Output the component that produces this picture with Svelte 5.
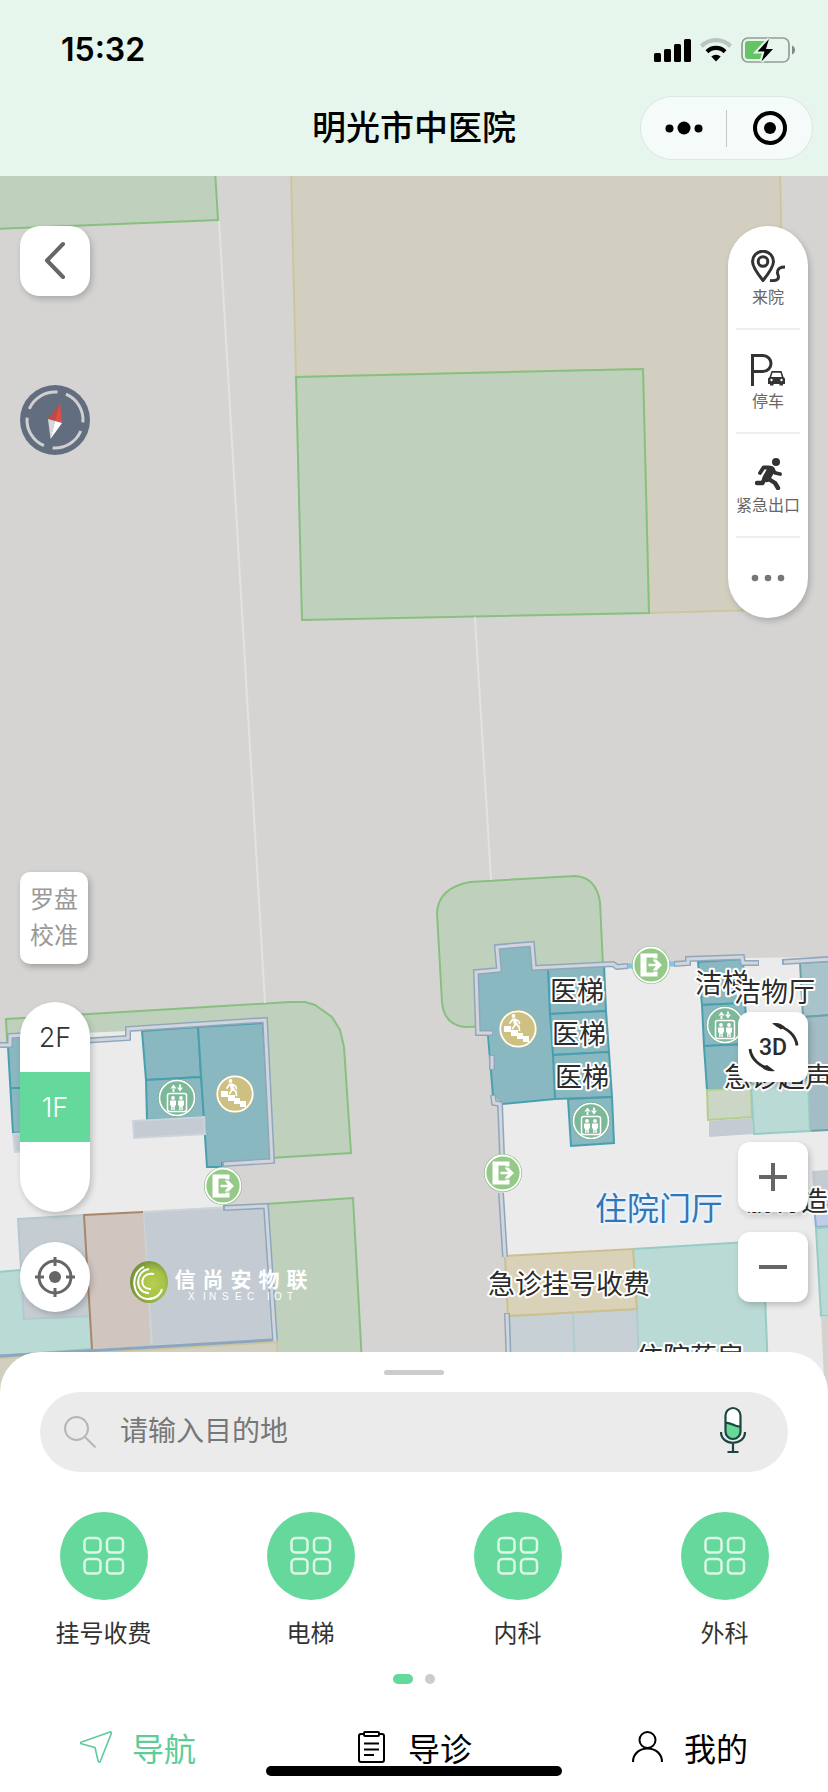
<script>
  const departments = ['挂号收费', '电梯', '内科', '外科'];
  const floors = ['2F', '1F'];
  let floor = $state('1F');
  let tab = $state('导航');
  let query = $state('');

  const roomLabels = [
    { text: '医梯', x: 550, y: 1001 },
    { text: '医梯', x: 552, y: 1044 },
    { text: '医梯', x: 555, y: 1087 },
    { text: '洁梯', x: 695, y: 993 },
    { text: '洁物厅', x: 734, y: 1002 },
    { text: '急诊超声', x: 724, y: 1087 },
    { text: '肠胃造影', x: 747, y: 1211 },
    { text: '急诊挂号收费', x: 488, y: 1294 },
    { text: '住院药房', x: 636, y: 1367 }
  ];
  const brandGlyphs = [...'信尚安物联'].map((c, i) => ({ c, x: 185 + i * 28 }));
</script>

{#snippet elevator(x, y)}
  <g transform="translate({x} {y})">
    <circle r="19" fill="#6fae8c" />
    <circle r="17.5" fill="#7db998" stroke="#fff" stroke-width="1.6" />
    <rect x="-9.5" y="-4.5" width="19" height="18" rx="2" fill="none" stroke="#fff" stroke-width="1.5" />
    <path d="M-3.5-9v3M3-13.5v3" stroke="#fff" stroke-width="1.8" />
    <path d="M-6.500-9.500l3-4 3 4zM0-10.500l3 4 3-4z" fill="#fff" />
    <g fill="#fff">
      <circle cx="-4" cy="0" r="1.9" /><circle cx="4" cy="0" r="1.9" />
      <path d="M-7 2.500h6v5h-1.200v4.500h-1.400v-3h-.8v3h-1.400v-4.500h-1.200zM1 2.500h6v5h-1.200v4.500h-1.400v-3h-.8v3h-1.400v-4.500h-1.200z" />
    </g>
  </g>
{/snippet}

{#snippet stairs(x, y)}
  <g transform="translate({x} {y})">
    <circle r="19" fill="#bfb070" />
    <circle r="17.7" fill="#cec083" stroke="#fff" stroke-width="1.8" />
    <path d="M-14-3h7v4h7v3h5v3h6v6h-6v-3h-6v-3h-6v-4h-7z" fill="#fff" />
    <circle cx="-4.5" cy="-13" r="1.900" fill="#fff" />
    <path d="M-5.500-10.500h3l2.500 6.500h-4z" fill="#fff" />
    <path d="M-1-4l2 1.500 .5 4M-2.500-4.500l-3 4M-5.500-9.500l-2.500 3.500M-2.500-9.500l3 1.500 1 2.500" fill="none" stroke="#fff" stroke-width="1.700" stroke-linecap="round" stroke-linejoin="round" />
  </g>
{/snippet}

{#snippet exit(x, y)}
  <g transform="translate({x} {y})">
    <circle r="19" fill="#82b878" />
    <circle r="17.500" fill="#94c988" stroke="#fff" stroke-width="1.800" />
    <path d="M-10.500-11.500h17v5h-4v-1h-7v15h7v-1h4v5h-17z" fill="#fff" />
    <path d="M-2.500-1.300h7.500l-3.500-4.200h4l5.500 5.500-5.500 5.500h-4l3.500-4.200h-7.500z" fill="#fff" stroke="#94c988" stroke-width="1.600" paint-order="stroke" />
  </g>
{/snippet}

<div class="page">
  <header>
    <div class="status">
      <time>15:32</time>
      <div class="signals">
        <svg width="37" height="24" viewBox="0 0 37 24" aria-hidden="true">
          <rect y="15" width="7" height="9" rx="1.5" /><rect x="10" y="11" width="7" height="13" rx="1.5" />
          <rect x="20" y="6" width="7" height="18" rx="1.5" /><rect x="30" y="1" width="7" height="23" rx="1.5" />
        </svg>
        <svg width="32" height="24" viewBox="0 0 32 24" aria-hidden="true">
          <path d="M1.500 8.200a20.500 20.500 0 0 1 29 0" fill="none" stroke="#b9c5be" stroke-width="4.200" />
          <path d="M7 13.700a12.700 12.700 0 0 1 18 0" fill="none" stroke="#000" stroke-width="4.200" />
          <path d="M11.300 18.600a6.600 6.600 0 0 1 9.400 0L16 23.500z" />
        </svg>
        <svg width="54" height="26" viewBox="0 0 54 26" aria-hidden="true">
          <rect x="1" y="1" width="47" height="24" rx="6" fill="none" stroke="#929d97" stroke-width="1.7" />
          <path d="M51 8.500c4 1.500 4 7.500 0 9z" fill="#7f8a84" />
          <rect x="4" y="4" width="22" height="18" rx="3" fill="#65c466" />
          <path d="M28 2L16.500 14.500h7L20.500 24.500 32 12h-7z" fill="#000" stroke="#e6f6ec" stroke-width="4" paint-order="stroke" />
        </svg>
      </div>
    </div>
    <div class="titlebar">
      <h1>明光市中医院</h1>
      <div class="capsule">
        <button aria-label="更多">
          <svg width="40" height="16" viewBox="0 0 40 16"><circle cx="5.500" cy="8.500" r="4" /><circle cx="20" cy="8" r="6.500" /><circle cx="34.500" cy="8.500" r="4" /></svg>
        </button>
        <i></i>
        <button aria-label="关闭">
          <svg width="36" height="36" viewBox="0 0 36 36"><circle cx="18" cy="18" r="15" fill="none" stroke="#000" stroke-width="4" /><circle cx="18" cy="18" r="6" /></svg>
        </button>
      </div>
    </div>
  </header>

  <main>
    <svg class="plan" viewBox="0 176 828 1216" preserveAspectRatio="xMidYMin slice" role="img" aria-label="院区地图">
      <rect y="170" width="828" height="1230" fill="#d5d4d2" />
      <g fill="#d2cfc1" stroke="#ccc69f" stroke-width="2">
        <path d="M291 170H780L789 609 649 613 643 369 296 377z" />
      </g>
      <g fill="#bfd1bd" stroke="#88c07f" stroke-width="2">
        <path d="M-5 229L218 220 215 170H-5z" />
        <path d="M296 377L643 369 649 613 302 620z" />
        <path d="M470 882L575 876Q596 877 600 902L603 966 500 1026 465 1027Q444 1025 442 1002L437 913Q438 888 470 882z" />
        <path d="M6 1019L290 1002 305 1002 315 1005 332 1017 340 1030 344 1047 351 1153 270 1158 8 1060z" />
        <path d="M266 1204L353 1198 364 1400H270z" />
      </g>
      <g stroke="#e3e2e1" stroke-width="2" fill="none">
        <path d="M219 221L265 1003M475 617L491 880" />
      </g>

      <!-- outpatient building -->
      <path d="M0 1045H10V1036L129 1031 265 1020 272 1161 222 1164 224 1207 267 1205 276 1342 0 1358z" fill="#ebebeb" />
      <g fill="#8ab8c0" stroke="#4a9fae" stroke-width="2">
        <path d="M8 1047L13 1133 40 1131V1036H12zM11 1088h20" />
        <path d="M142 1031L198 1027 201 1077 146 1080z" />
        <path d="M146 1080L201 1077 204 1117 147 1120z" />
        <path d="M198 1027L263 1023 271 1160 222 1163V1167L207 1167z" />
      </g>
      <g fill="#c5cbd2" stroke="#ccd4da" stroke-width="2">
        <path d="M13 1134L40 1132V1150L15 1152zM133 1121L204 1117 205 1134 134 1138z" />
        <path d="M143 1212L265 1205 272 1340 152 1346z" />
      </g>
      <path d="M-2 1272L21 1270 90 1316 92 1349-2 1356z" fill="#badad5" stroke="#97cbc3" stroke-width="2" />
      <path d="M18 1219L84 1215 90 1316 24 1319z" fill="#c5cdd3" stroke="#b4c9ce" stroke-width="2" />
      <path d="M143 1212L84 1215 92 1349 151 1346z" fill="#d1c5c0" />
      <path d="M143 1212L84 1215 92 1349" fill="none" stroke="#a8876a" stroke-width="2" />
      <path d="M-2 1358L277 1342 279 1400H-2z" fill="#d2cfc0" stroke="#cbc59d" stroke-width="2" />
      <g fill="none">
        <path d="M-2 1045H10V1036L40 1034M80 1041L128 1038V1029L265 1020 272 1161 222 1164M223 1208L266 1206 275 1341" stroke="#8fa7bd" stroke-width="6" />
        <path d="M-2 1045H10V1036L40 1034M80 1041L128 1038V1029L265 1020 272 1161 224 1164M225 1208L266 1206 275 1341" stroke="#d1d5dc" stroke-width="3" />
        <path d="M-2 1356L272 1340" stroke="#8ba6bd" stroke-width="3" />
      </g>

      <!-- inpatient building -->
      <path d="M500 1104L555 1099 604 966 675 964 688 960 743 958 828 957V1400H511L506 1257z" fill="#ebebeb" />
      <path d="M478 974L500 972 497 949 531 946 534 968 548 967 555 1099 502 1104 493 1095 489 1033H480z" fill="#8ab8c0" />
      <g fill="#8ab8c0" stroke="#4a9fae" stroke-width="2">
        <path d="M548 968L604 965 606 1011 550 1014z" />
        <path d="M550 1014L606 1011 609 1052 553 1055z" />
        <path d="M553 1055L609 1052 612 1097 555 1099z" />
        <path d="M568 1099L612 1097 614 1143 571 1146z" />
        <path d="M698 962L743 959 745 1003 702 1005z" />
        <path d="M702 1005L745 1003 748 1044 704 1046z" />
        <path d="M704 1046L748 1044 751 1088 707 1090z" />
        <path d="M555 1099L502 1104M488 1035L493 1096" />
      </g>
      <path d="M800 963L830 961V1015L803 1017z" fill="#a9c3cb" stroke="#6fa1ac" stroke-width="2" />
      <path d="M803 1017L830 1015V1130L810 1131z" fill="#a3bcc5" stroke="#6fa1ac" stroke-width="2" />
      <path d="M707 1090L751 1088 752 1117 708 1120z" fill="#ccd6c6" stroke="#b4d088" stroke-width="2" />
      <path d="M709 1121L752 1118 753 1134 709 1137z" fill="#c5cbd2" />
      <path d="M751 1084L808 1080 810 1131 754 1134z" fill="#badad5" stroke="#97cbc3" stroke-width="2" />
      <path d="M812 1171L830 1170V1205H814z" fill="#c5cbd2" />
      <path d="M814 1205H830V1226L816 1227z" fill="#c0cde6" stroke="#94abd4" stroke-width="2" />
      <path d="M816 1228L830 1227V1316H821z" fill="#badad5" stroke="#97cbc3" stroke-width="2" />
      <path d="M821 1316H830V1400H825z" fill="#d5d3d0" />
      <path d="M633 1249L763 1241 769 1400H640z" fill="#badad5" stroke="#97cbc3" stroke-width="2" />
      <path d="M509 1316L637 1309 640 1400H511zM573 1312L576 1400" fill="#c7d0d4" stroke="#aecdd2" stroke-width="2" />
      <path d="M505 1256L633 1249 637 1309 508 1316z" fill="#d9d2b8" stroke="#cbc08e" stroke-width="2" />
      <g fill="none">
        <path d="M627 966H640M662 964H676" stroke="#7fc4f0" stroke-width="5" />
        <path d="M493 1033H478L476 972 499 970 497 947 532 944 534 968 613 964 617 967 628 966M674 964L688 963V959L742 957 743 963 759 963M782 962L830 959M492 1055V1070M493 1095L494 1103 500 1104 502 1155M501 1193L505 1257M507 1313L510 1400" stroke="#8fa7bd" stroke-width="6" />
        <path d="M492 1033H478L476 972 499 970 497 947 532 944 534 968 613 964 617 967 627 966M675 964L688 963V959L742 957 743 963 758 963M784 962L830 959M492 1056V1069M493 1096L494 1103 500 1104 502 1155M501 1193L505 1257M507 1314L510 1400" stroke="#d1d5dc" stroke-width="3" />
      </g>

      {@render elevator(177, 1098)}
      {@render stairs(235, 1094)}
      {@render exit(223, 1186)}
      {@render stairs(518, 1029)}
      {@render elevator(591, 1121)}
      {@render elevator(725, 1025)}
      {@render exit(651, 965)}
      {@render exit(503, 1173)}

      <g class="room">
        {#each roomLabels as l}<text x={l.x} y={l.y}>{l.text}</text>{/each}
      </g>
      <text class="hall" x="595" y="1220">住院门厅</text>

      <g>
        <radialGradient id="leaf" cx="60%" cy="55%" r="60%">
          <stop offset="0" stop-color="#b8cf4e" /><stop offset=".55" stop-color="#a5c148" /><stop offset="1" stop-color="#6f9038" />
        </radialGradient>
        <ellipse cx="149" cy="1282" rx="19" ry="21" fill="url(#leaf)" />
        <g fill="none" stroke="#fff" stroke-width="2">
          <path d="M144 1267C130 1272 131 1298 148 1299 156 1299 161 1294 162 1289" />
          <path d="M149 1269C134 1271 135 1294 149 1293" />
          <path d="M154 1274C140 1271 138 1290 151 1289" />
        </g>
        <g class="brand">
          {#each brandGlyphs as g}<text x={g.x} y="1287">{g.c}</text>{/each}
        </g>
        <text class="brand-en" x="188 203 209 222 235 247 259 267 274 287" y="1300">XINSEC IOT</text>
      </g>
    </svg>

    <div class="side left">
      <div class="group top">
        <button class="tile back" aria-label="返回">
          <svg width="24" height="40" viewBox="0 0 24 40"><path d="M20 3L4 19.500 20 36" fill="none" stroke="#666" stroke-width="4" stroke-linecap="round" stroke-linejoin="round" /></svg>
        </button>
        <button class="compass" aria-label="指南针">
          <svg width="70" height="70" viewBox="0 0 70 70">
            <circle cx="35" cy="35" r="35" fill="#626e80" />
            <circle cx="35" cy="35" r="28" fill="none" stroke="#d0d0d1" stroke-width="3" stroke-dasharray="35 8.98" transform="rotate(-67 35 35)" />
            <path d="M40 18L28 34 35 36z" fill="#c04a45" /><path d="M40 18L42 38 35 36z" fill="#e04f46" />
            <path d="M30.500 54L28 34 35 36z" fill="#d8d8da" /><path d="M30.500 54L42 38 35 36z" fill="#fff" />
          </svg>
        </button>
      </div>
      <div class="group bottom">
        <button class="calibrate">罗盘<br />校准</button>
        <div class="floors">
          {#each floors as f}
            <button class:on={floor === f} onclick={() => (floor = f)}>{f}</button>
          {/each}
        </div>
        <button class="tile round" aria-label="定位">
          <svg width="40" height="40" viewBox="0 0 40 40"><circle cx="20" cy="20" r="16" fill="none" stroke="#666" stroke-width="3" /><circle cx="20" cy="20" r="6" fill="#666" /><path d="M20 0v9M20 31v9M0 20h9M31 20h9" stroke="#666" stroke-width="3" /></svg>
        </button>
      </div>
    </div>

    <div class="side right">
      <nav class="tools" aria-label="地图工具">
        <button>
          <svg width="34" height="32" viewBox="0 0 34 32" fill="none" stroke="#333" stroke-width="3">
            <path d="M12 30.500C6 23 1.500 17 1.500 11.500a10.500 10.300 0 0 1 21 0C22.500 17 18 23 12 30.500z" stroke-linejoin="round" /><circle cx="12" cy="11.500" r="4.800" />
            <path d="M19 30.500c5 .5 8.500-.5 8.500-3.500 0-2-1.500-3-1-5.500.5-3 3.500-4.500 7.500-4.500" />
          </svg>
          <span>来院</span>
        </button>
        <button>
          <svg width="34" height="32" viewBox="0 0 34 32">
            <path d="M1.500 32V1.500h10.500a8 8 0 0 1 0 16H2" fill="none" stroke="#333" stroke-width="3" />
            <path d="M20.500 17h10l2 6 1.500 1.500V30h-2v1.500h-3.500V30h-6v1.500h-3.500V30h-2v-5.500l1.500-1.500zM21.500 18.800l-1.300 4.200h10.600l-1.300-4.200z" fill="#333" fill-rule="evenodd" />
            <circle cx="20.500" cy="26" r="1.200" fill="#fff" /><circle cx="30.500" cy="26" r="1.200" fill="#fff" />
          </svg>
          <span>停车</span>
        </button>
        <button>
          <svg width="34" height="32" viewBox="0 0 34 32">
            <circle cx="25" cy="4" r="4" fill="#333" />
            <path d="M20 12L15.500 20" stroke="#333" stroke-width="8" stroke-linecap="round" />
            <path d="M18 9.500h-5.500L9 15M19 10l5.500 5 4.500 1" fill="none" stroke="#333" stroke-width="3.800" stroke-linecap="round" stroke-linejoin="round" />
            <path d="M14 20l-2.500 5H6M16 20l8 5 3 5" fill="none" stroke="#333" stroke-width="4.400" stroke-linecap="round" stroke-linejoin="round" />
          </svg>
          <span>紧急出口</span>
        </button>
        <button class="more" aria-label="更多工具">
          <svg width="34" height="8" viewBox="0 0 34 8" fill="#777"><circle cx="4" cy="4" r="3.300" /><circle cx="17" cy="4" r="3.300" /><circle cx="30" cy="4" r="3.300" /></svg>
        </button>
      </nav>
      <div class="view">
        <button class="tile" aria-label="切换3D">
          <svg width="54" height="54" viewBox="0 0 54 54">
            <path d="M30 5C42 8 50 16 51 25.500M4 29C5 39 14 47 25 49.500" fill="none" stroke="#2b2b2b" stroke-width="2.800" />
            <path d="M26 3.500C32 2 36 4 39 7L35 9.500zM29 51C23 52 19 50.500 15.500 47L21 45z" fill="#2b2b2b" />
            <text class="three" x="27" y="35" text-anchor="middle">3D</text>
          </svg>
        </button>
        <div class="zoom">
          <button class="tile" aria-label="放大"><svg width="28" height="28" viewBox="0 0 28 28"><path d="M14 0v28M0 14h28" stroke="#666" stroke-width="4" /></svg></button>
          <button class="tile" aria-label="缩小"><svg width="28" height="28" viewBox="0 0 28 28"><path d="M0 14h28" stroke="#666" stroke-width="4" /></svg></button>
        </div>
      </div>
    </div>
  </main>

  <section class="sheet">
    <div class="handle"></div>
    <label class="search">
      <svg width="32" height="32" viewBox="0 0 32 32" fill="none" stroke="#b6b6b6" stroke-width="2"><circle cx="12.500" cy="12.500" r="11.500" /><path d="M20.500 20.500L31.500 31.500" /></svg>
      <input type="text" placeholder="请输入目的地" aria-label="目的地" bind:value={query} />
      <button aria-label="语音输入">
        <svg width="28" height="48" viewBox="0 0 28 48">
          <rect x="6.500" y="2" width="15" height="31" rx="7.500" fill="#fff" />
          <path d="M6.500 17c6-1 8 4 15 3.500v5a7.500 7.500 0 0 1-15 0z" fill="#66d996" />
          <g fill="none" stroke="#1b4740" stroke-width="2.200"><rect x="6.500" y="2" width="15" height="31" rx="7.500" /><path d="M6.500 17c6-1 8 4 15 3.500M2 26c0 14.500 24 14.500 24 0M14 37v9M8.500 46h11" /></g>
        </svg>
      </button>
    </label>
    <div class="departments">
      {#each departments as d}
        <button>
          <i>
            <svg width="44" height="40" viewBox="0 0 44 40" fill="none" stroke="#dcf6e7" stroke-width="2.500"><rect x="2.500" y="2" width="16" height="14.500" rx="4" /><rect x="25" y="2" width="16" height="14.500" rx="4" /><rect x="2.500" y="23" width="16" height="14.500" rx="4" /><rect x="25" y="23" width="16" height="14.500" rx="4" /></svg>
          </i>
          <span>{d}</span>
        </button>
      {/each}
    </div>
    <div class="dots"><i class="on"></i><i></i></div>
  </section>

  <nav class="tabs" aria-label="主导航">
    <button class:on={tab === '导航'} onclick={() => (tab = '导航')}>
      <svg width="32" height="32" viewBox="0 0 32 32"><path d="M30 .9L1 11.200q-1.500 1 .2 1.500L15 16.500l3.200 13.800q1 1.500 2 .2L31.300 2.500Q31.500.5 30 .9z" fill="none" stroke="currentColor" stroke-width="1.600" stroke-linejoin="round" /></svg>
      导航
    </button>
    <button class:on={tab === '导诊'} onclick={() => (tab = '导诊')}>
      <svg width="32" height="32" viewBox="0 0 32 32" fill="none" stroke="currentColor" stroke-width="2"><rect x="3" y="3" width="25" height="28" rx="2" /><rect x="8" y="1" width="15" height="4" rx="1" fill="#fff" /><path d="M8 12.500h15M8 18.500h15M8 24h10" /></svg>
      导诊
    </button>
    <button class:on={tab === '我的'} onclick={() => (tab = '我的')}>
      <svg width="32" height="32" viewBox="0 0 32 32" fill="none" stroke="currentColor" stroke-width="2"><circle cx="15.500" cy="9" r="8" /><path d="M1 31c0-18 29-18 29 0" /></svg>
      我的
    </button>
    <div class="home"></div>
  </nav>
</div>

<style>
  :global(body) { margin: 0; }
  .page {
    display: flex;
    flex-direction: column;
    min-height: 100vh;
    overflow: hidden;
    background: #fff;
    color: #333;
    font-family: "Liberation Sans", "Noto Sans CJK SC", sans-serif;
  }
  button {
    display: flex;
    align-items: center;
    justify-content: center;
    padding: 0;
    border: 0;
    background: none;
    color: inherit;
    font: inherit;
    cursor: pointer;
  }
  svg { display: block; flex: none; }

  header { padding-bottom: 16px; background: #e6f6ec; color: #000; }
  .status {
    display: flex;
    align-items: center;
    justify-content: space-between;
    box-sizing: border-box;
    height: 96px;
    padding: 4px 33px 0 61px;
  }
  time { font: 600 32px/40px Inter, sans-serif; }
  .signals { display: flex; align-items: center; gap: 9px; }
  .titlebar {
    display: grid;
    grid-template-columns: 1fr auto 1fr;
    align-items: center;
    height: 64px;
    padding: 0 15px;
  }
  h1 { grid-column: 2; margin: 0; font-size: 34px; font-weight: 500; line-height: 64px; }
  .capsule {
    display: flex;
    align-items: center;
    justify-self: end;
    box-sizing: border-box;
    width: 173px;
    height: 64px;
    border: 1px solid #dde6e1;
    border-radius: 32px;
    background: #f5fbf8;
  }
  .capsule button { flex: 1; height: 100%; }
  .capsule i { width: 1px; height: 37px; background: #c2c8c5; }

  main { position: relative; display: flex; flex: 1; justify-content: space-between; }
  .plan { position: absolute; inset: 0; width: 100%; height: 100%; }
  .room text, .hall {
    font-family: "Noto Sans CJK SC", sans-serif;
    font-size: 27px;
    fill: #2b2b2b;
    stroke: #fff;
    stroke-width: 4px;
    stroke-linejoin: round;
    paint-order: stroke;
  }
  .hall { font-size: 32px; fill: #3376b5; stroke: #eaf3fb; }
  .brand text { font: 700 21px "Noto Sans CJK SC", sans-serif; fill: #fff; text-anchor: middle; }
  .brand-en { font: 10px "Liberation Sans", sans-serif; fill: #fff; }

  .side {
    position: relative;
    display: flex;
    flex-direction: column;
    justify-content: space-between;
    gap: 40px;
    padding: 50px 20px 80px;
  }
  .right { align-items: flex-end; padding-bottom: 90px; }
  .group { display: flex; flex-direction: column; }
  .top { gap: 89px; }
  .bottom { gap: 30px; }
  .tile {
    width: 70px;
    height: 70px;
    border-radius: 12px;
    background: #fff;
    box-shadow: 2px 3px 6px rgba(0, 0, 0, .2);
  }
  .back { border-radius: 20px; }
  .round { border-radius: 50%; }
  .compass { width: 70px; height: 70px; border-radius: 50%; }
  .calibrate {
    width: 68px;
    height: 92px;
    margin-bottom: 8px;
    border-radius: 10px;
    background: #fff;
    box-shadow: 2px 3px 6px rgba(0, 0, 0, .25);
    color: #999;
    font-size: 24px;
    line-height: 36px;
  }
  .floors {
    width: 70px;
    height: 210px;
    overflow: hidden;
    border-radius: 35px;
    background: #fff;
    box-shadow: 2px 3px 6px rgba(0, 0, 0, .2);
    font: 300 27px Inter, sans-serif;
  }
  .floors button { width: 70px; height: 70px; }
  .floors .on { background: #65d89b; color: #fff; }
  .tools {
    box-sizing: border-box;
    width: 80px;
    padding: 0 8px;
    border-radius: 40px;
    background: #fff;
    box-shadow: 2px 3px 6px rgba(0, 0, 0, .2);
    color: #666;
    font-size: 16px;
    line-height: 24px;
  }
  .tools button {
    flex-direction: column;
    justify-content: flex-start;
    gap: 4px;
    box-sizing: border-box;
    width: 100%;
    height: 104px;
    padding-top: 24px;
    border-bottom: 2px solid #eee;
    white-space: nowrap;
  }
  .tools .more { justify-content: center; height: 80px; padding: 0; border: 0; }
  .view { display: flex; flex-direction: column; gap: 60px; }
  .zoom { display: flex; flex-direction: column; gap: 20px; }
  .three { font: 500 23px Roboto, sans-serif; fill: #2b2b2b; }

  .sheet {
    position: relative;
    margin-top: -40px;
    padding-top: 18px;
    border-radius: 40px 40px 0 0;
    background: #fff;
  }
  .handle { width: 60px; height: 5px; margin: 0 auto 17px; border-radius: 3px; background: #ccc; }
  .search {
    display: flex;
    align-items: center;
    gap: 24px;
    height: 80px;
    margin: 0 40px 40px;
    padding: 0 41px 0 24px;
    box-sizing: border-box;
    border-radius: 40px;
    background: #ebebeb;
  }
  .search button { padding-bottom: 4px; }
  input {
    flex: 1;
    min-width: 0;
    padding: 0;
    border: 0;
    outline: 0;
    background: none;
    color: #333;
    font: inherit;
    font-size: 28px;
    line-height: 40px;
  }
  input::placeholder { color: #777; opacity: 1; }
  .departments { display: grid; grid-template-columns: repeat(4, 1fr); }
  .departments button { flex-direction: column; gap: 16px; font-size: 24px; line-height: 36px; }
  .departments i {
    display: flex;
    align-items: center;
    justify-content: center;
    width: 88px;
    height: 88px;
    border-radius: 50%;
    background: #65d89b;
  }
  .dots { display: flex; justify-content: center; gap: 12px; padding: 22px 0 20px; }
  .dots i { width: 10px; height: 10px; border-radius: 5px; background: #ccc; }
  .dots .on { width: 20px; background: #65d89b; }

  .tabs {
    position: relative;
    display: grid;
    grid-template-columns: repeat(3, 1fr);
    height: 88px;
    color: #000;
    font-size: 32px;
  }
  .tabs button { gap: 20px; padding-bottom: 2px; }
  .tabs .on { color: #5fcb9b; }
  .home {
    position: absolute;
    bottom: 16px;
    left: 50%;
    width: 296px;
    height: 10px;
    border-radius: 5px;
    background: #000;
    transform: translateX(-50%);
  }
</style>
